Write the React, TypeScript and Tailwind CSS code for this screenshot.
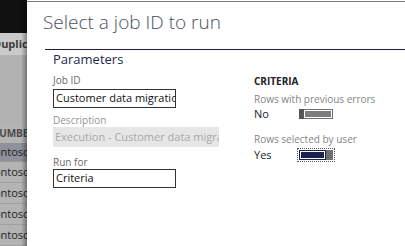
import React from 'react';

const font = { fontFamily: '"Open Sans", "Noto Sans", sans-serif' };

function ToggleOff() {
  return (
    <div className="flex h-[10px] w-[34px] bg-[#6f6f6f]">
      <div className="w-[5px] bg-[#555555]" />
      <div className="my-px mr-px flex-1 border border-white bg-[#7d7d7d]" />
    </div>
  );
}

function ToggleOn() {
  return (
    <div className="outline outline-1 outline-dotted outline-offset-1 outline-[#555]">
      <div className="flex h-[10px] w-[34px]">
        <div className="flex-1 bg-[#1b2050] p-px">
          <div className="h-full border border-white bg-[#1b2050]" />
        </div>
        <div className="w-[7px] bg-[#6f6f6f]" />
      </div>
    </div>
  );
}

function LeftStrip() {
  const rows = ['Contoso', 'Contoso', 'Contoso', 'Contoso'];
  return (
    <div className="relative flex h-full w-[27px] shrink-0 flex-col overflow-hidden bg-[#b4b4b4]">
      <div className="h-[33px] bg-[#111111]" />
      <div className="flex h-[23px] items-center bg-[#cacaca] text-[11px] font-bold whitespace-nowrap text-[#3a3a3a]">
        <span className="-ml-[7px]">Duplicate</span>
      </div>
      <div className="h-[70px] bg-[#b2b2b2]" />
      <div className="flex h-[19px] items-center text-[10px] font-bold whitespace-nowrap text-[#4a4a4a]">
        <span className="-ml-[9px]">NUMBER</span>
      </div>
      <div className="flex h-[19px] items-center border-b border-[#9a9a9a] bg-[#8e9199] text-[11px] whitespace-nowrap text-[#222]">
        <span className="-ml-[13px]">Contoso</span>
      </div>
      {rows.map((r, i) => (
        <div
          key={i}
          className="flex h-[21px] shrink-0 items-center border-b border-[#a0a0a0] text-[11px] whitespace-nowrap text-[#222]"
        >
          <span className="-ml-[13px]">{r}</span>
        </div>
      ))}
      <div className="absolute top-0 right-0 h-full w-[6px] bg-gradient-to-r from-transparent to-black/35" />
    </div>
  );
}

export default function App() {
  return (
    <div className="flex h-[246px] w-[405px] overflow-hidden bg-white" style={font}>
      <LeftStrip />
      <div className="flex flex-1 flex-col bg-white">
        <div className="mt-px h-px bg-[#7d7d7d]" />
        <div className="flex h-[47px] items-center pb-[6px] pl-[16px] text-[19px] font-light whitespace-nowrap text-[#4a5060]">
          Select a job ID to run
        </div>
        <div className="ml-[18px] h-px bg-[#1b2040]" />
        <div className="pl-[26px]">
          <div className="mt-px text-[13px] leading-[16px] text-[#1f2a4d]">Parameters</div>
          <div className="mt-[7px] flex">
            <div className="flex w-[201px] shrink-0 flex-col">
              <div className="text-[10px] leading-[12px] text-[#6a6a6a]">Job ID</div>
              <div className="mt-[3px] flex h-[19px] w-[123px] items-center overflow-hidden border border-[#333] pl-[2px] text-[11px] whitespace-nowrap text-[#111]">
                Customer data migration
              </div>
              <div className="mt-[6px] text-[10px] leading-[12px] text-[#959595]">Description</div>
              <div className="mt-px flex h-[20px] w-[166px] items-center overflow-hidden bg-[#e6e6e6] pl-[2px] text-[11px] whitespace-nowrap text-[#a8a8a8]">
                Execution - Customer data migration
              </div>
              <div className="mt-[9px] text-[10px] leading-[12px] text-[#6a6a6a]">Run for</div>
              <div className="mt-px flex h-[19px] w-[123px] items-center overflow-hidden border border-[#333] pl-[2px] text-[11px] whitespace-nowrap text-[#111]">
                Criteria
              </div>
            </div>
            <div className="flex flex-col pt-px">
              <div className="text-[10px] leading-[12px] font-bold text-[#222]">CRITERIA</div>
              <div className="mt-[6px] text-[10px] leading-[12px] whitespace-nowrap text-[#858585]">
                Rows with previous errors
              </div>
              <div className="mt-[2px] flex h-[14px] items-center">
                <span className="w-[45px] text-[11px] text-[#222]">No</span>
                <ToggleOff />
              </div>
              <div className="mt-[12px] text-[10px] leading-[12px] whitespace-nowrap text-[#858585]">
                Rows selected by user
              </div>
              <div className="mt-[3px] flex h-[14px] items-center">
                <span className="w-[45px] text-[11px] text-[#222]">Yes</span>
                <ToggleOn />
              </div>
            </div>
          </div>
        </div>
      </div>
    </div>
  );
}
